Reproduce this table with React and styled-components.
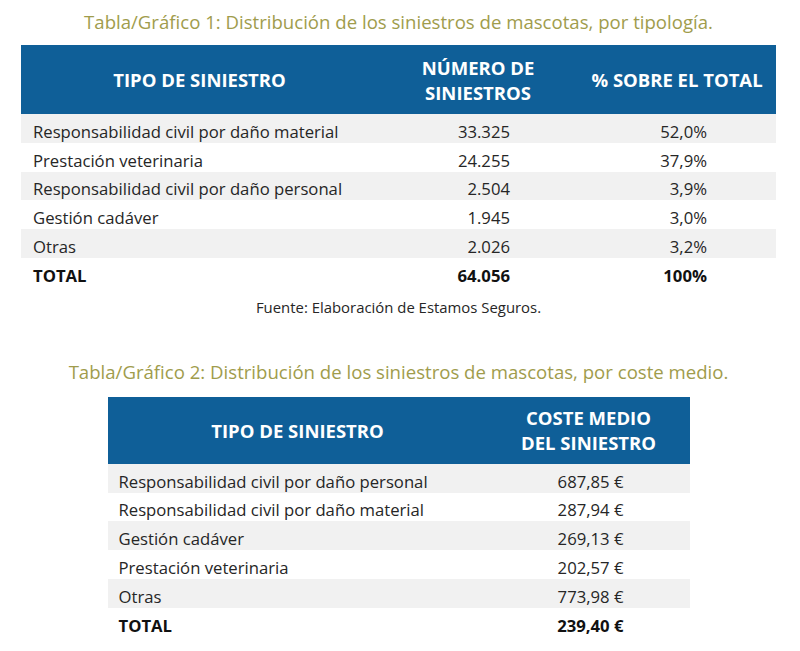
import React from "react";
import styled, { createGlobalStyle } from "styled-components";

const GlobalStyle = createGlobalStyle`
  html, body { margin: 0; padding: 0; background: #ffffff; }
  body { font-family: "Open Sans", "Noto Sans", Arial, sans-serif; }
`;

const Page = styled.div`
  width: 797px;
  padding-top: 9px;
  display: flex;
  flex-direction: column;
  align-items: center;
`;

const Caption = styled.div`
  color: #a09c4c;
  font-size: 18.6px;
  line-height: 25px;
  margin-top: ${(p) => p.$top || 0}px;
  margin-bottom: ${(p) => p.$gap}px;
  white-space: nowrap;
`;

const Source = styled.div`
  color: #262626;
  font-size: 14.9px;
  line-height: 20px;
  margin-top: 10px;
`;

const Table = styled.div`
  display: grid;
  grid-template-columns: ${(p) => p.$cols};
  width: ${(p) => p.$width}px;
`;

const HeadCell = styled.div`
  background: #0f5f98;
  color: #ffffff;
  font-weight: 700;
  font-size: 18.5px;
  line-height: 25px;
  height: ${(p) => p.$h}px;
  display: flex;
  align-items: center;
  justify-content: center;
  text-align: center;
`;

const Cell = styled.div`
  height: 28.8px;
  background: ${(p) => (p.$shade ? "#f1f1f1" : "#ffffff")};
  color: ${(p) => (p.$bold ? "#111111" : "#262626")};
  font-weight: ${(p) => (p.$bold ? 700 : 400)};
  font-size: 16.7px;
  line-height: 23px;
  display: flex;
  align-items: flex-end;
  justify-content: ${(p) => (p.$num ? "flex-end" : "flex-start")};
  padding: ${(p) => (p.$num ? `0 ${p.$pad}px 0 0` : `0 0 0 ${p.$pad}px`)};
  white-space: nowrap;
  box-sizing: border-box;
`;

const table1 = [
  ["Responsabilidad civil por daño material", "33.325", "52,0%"],
  ["Prestación veterinaria", "24.255", "37,9%"],
  ["Responsabilidad civil por daño personal", "2.504", "3,9%"],
  ["Gestión cadáver", "1.945", "3,0%"],
  ["Otras", "2.026", "3,2%"],
];

const table2 = [
  ["Responsabilidad civil por daño personal", "687,85 €"],
  ["Responsabilidad civil por daño material", "287,94 €"],
  ["Gestión cadáver", "269,13 €"],
  ["Prestación veterinaria", "202,57 €"],
  ["Otras", "773,98 €"],
];

export default function App() {
  return (
    <>
      <GlobalStyle />
      <Page>
        <Caption $gap={11}>
          Tabla/Gráfico 1: Distribución de los siniestros de mascotas, por tipología.
        </Caption>
        <Table $cols="357px 200px 198px" $width={755}>
          <HeadCell $h={69}>TIPO DE SINIESTRO</HeadCell>
          <HeadCell $h={69}>
            NÚMERO DE
            <br />
            SINIESTROS
          </HeadCell>
          <HeadCell $h={69}>% SOBRE EL TOTAL</HeadCell>
          {table1.map((r, i) => (
            <React.Fragment key={i}>
              <Cell $shade={i % 2 === 0} $pad={12}>{r[0]}</Cell>
              <Cell $shade={i % 2 === 0} $num $pad={68}>{r[1]}</Cell>
              <Cell $shade={i % 2 === 0} $num $pad={69}>{r[2]}</Cell>
            </React.Fragment>
          ))}
          <Cell $bold $pad={12}>TOTAL</Cell>
          <Cell $bold $num $pad={68}>64.056</Cell>
          <Cell $bold $num $pad={69}>100%</Cell>
        </Table>
        <Source>Fuente: Elaboración de Estamos Seguros.</Source>
        <Caption $top={42} $gap={13}>
          Tabla/Gráfico 2: Distribución de los siniestros de mascotas, por coste medio.
        </Caption>
        <Table $cols="380px 202px" $width={582}>
          <HeadCell $h={67}>TIPO DE SINIESTRO</HeadCell>
          <HeadCell $h={67}>
            COSTE MEDIO
            <br />
            DEL SINIESTRO
          </HeadCell>
          {table2.map((r, i) => (
            <React.Fragment key={i}>
              <Cell $shade={i % 2 === 0} $pad={11}>{r[0]}</Cell>
              <Cell $shade={i % 2 === 0} $num $pad={66}>{r[1]}</Cell>
            </React.Fragment>
          ))}
          <Cell $bold $pad={11}>TOTAL</Cell>
          <Cell $bold $num $pad={66}>239,40 €</Cell>
        </Table>
      </Page>
    </>
  );
}
